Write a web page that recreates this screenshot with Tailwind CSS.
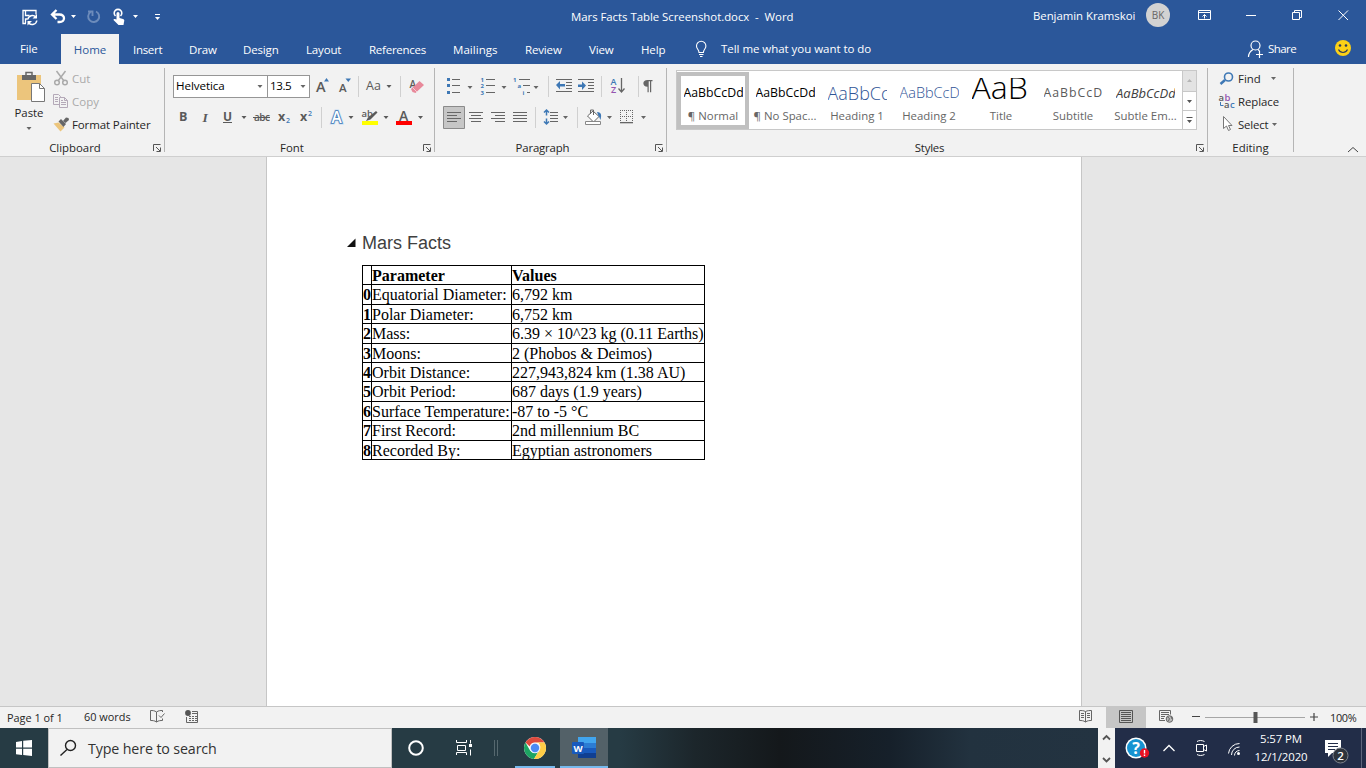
<!DOCTYPE html>
<html lang="en">
<head>
<meta charset="utf-8">
<title>Mars Facts Table Screenshot.docx - Word</title>
<script src="https://cdn.jsdelivr.net/npm/@tailwindcss/browser@4"></script>
</head>
<body class="w-[1366px] h-[768px] overflow-hidden flex flex-col bg-[#e6e6e6] font-['Open_Sans','Noto_Sans',sans-serif] text-[11.4px] leading-4 text-[#262626] whitespace-nowrap">

<!-- Title bar -->
<header class="h-[34px] shrink-0 bg-[#2b579a] text-white flex">
  <svg class="w-[571px] h-[34px] shrink-0" viewBox="0 0 571 34" fill="none">
    <path d="M26 23.500h-3v-13h13v4M25.500 11v4.500h4M25.500 23v-4h2" stroke="#fff" stroke-width="1.300"/>
    <path d="M27.800 19.500a4.600 4.600 0 0 1 8-2.500M36.800 20.500a4.600 4.600 0 0 1-8 2.500" stroke="#fff" stroke-width="1.500"/><path d="M37 14v4.500h-4.500zM27.500 25.500v-4.500h4.500z" fill="#fff"/>
    <path d="M53 14.500h6.500c6 0 6 7.500 0 7.500h-2M56.500 10l-4.500 4.500 4.500 4.500" stroke="#fff" stroke-width="2.300"/>
    <path d="M71 15h5l-2.500 3zM133 15h5l-2.500 3z" fill="#fff"/>
    <path d="M90.500 12a5.500 5.500 0 1 0 5.500-.5M88 11.500h4.500v4.500" stroke="#6d8cbb" stroke-width="1.900"/>
    <path d="M115.500 16a3.800 3.800 0 1 1 5 0" stroke="#fff" stroke-width="1.600"/>
    <path d="M116.500 13.500a1.500 1.500 0 0 1 3 0v4.500l3.500 1c1.500.5 1.500 1.500 1 3l-.5 3h-5l-5-5c0-1 1.500-1.500 3-.5z" fill="#fff"/>
    <path d="M155 14.500h5" stroke="#fff"/><path d="M155 17h5l-2.500 3z" fill="#fff"/>
  </svg>
  <div class="w-[462px] h-[33px] flex items-center whitespace-pre tracking-[-0.03px]">Mars Facts Table Screenshot.docx  -  Word</div>
  <div class="w-[113px] h-[31px] flex items-center tracking-[-0.04px]">Benjamin Kramskoi</div>
  <div class="size-6 mt-[3px] rounded-full bg-[#d2d2d2] text-[#666] text-[10px] flex items-center justify-center">BK</div>
  <svg class="w-[196px] h-[34px] shrink-0" viewBox="1170 0 196 34" fill="none" stroke="#fff">
    <path d="M1198.500 10.500h12v9h-12zM1198.500 12.500h12M1204.500 18.500v-4M1202.500 16.500l2-2 2 2M1246 15.500h10M1292.500 12.500h7v7h-7zM1294.500 12v-1.500h7v7h-2M1338.500 10.500l9.500 9.500M1348 10.500l-9.500 9.500"/>
  </svg>
</header>

<!-- Ribbon tabs -->
<nav class="h-[30px] shrink-0 bg-[#2b579a] text-white flex items-center text-[11.500px] tracking-[-0.15px]">
  <span class="w-[61px] pl-5">File</span>
  <span class="w-[58px] h-[30px] pt-0.5 bg-[#f2f2f2] text-[#2b579a] flex items-center justify-center tracking-normal">Home</span>
  <span class="w-[70px] pl-3.5 pt-0.5 tracking-[-0.3px]">Insert</span>
  <span class="w-[54px] pt-0.5">Draw</span>
  <span class="w-[63px] pt-0.5">Design</span>
  <span class="w-[63px] pt-0.5">Layout</span>
  <span class="w-[84px] pt-0.5 tracking-[-0.25px]">References</span>
  <span class="w-[72px] pt-0.5 tracking-[0.05px]">Mailings</span>
  <span class="w-[64px] pt-0.5">Review</span>
  <span class="w-[52px] pt-0.5">View</span>
  <span class="w-[52px] pt-0.5">Help</span>
  <svg class="w-[28px] h-[30px]" viewBox="693 34 28 30" fill="none" stroke="#fff" stroke-width="1.100"><path d="M699 52.500c0-3-2.500-3.500-2.500-6.500a4.700 4.700 0 0 1 9.400 0c0 3-2.500 3.500-2.500 6.500zM699 54.500h4.500M700 56.500h2.500"/></svg>
  <span class="w-[526px] tracking-[-0.04px]">Tell me what you want to do</span>
  <svg class="w-[21px] h-[30px]" viewBox="1247 34 21 30" fill="none" stroke="#fff" stroke-width="1.200"><circle cx="1255.500" cy="45.500" r="4.500"/><path d="M1248.500 57c0-4 2-6 4.500-7.500M1258 49.500l1.500 1.500M1256 54.500h7M1259.500 51v7"/></svg>
  <span class="w-[67px] tracking-[-0.55px]">Share</span>
  <svg class="w-[31px] h-[30px]" viewBox="1335 34 31 30"><circle cx="1343" cy="48" r="8" fill="#fcd116"/><circle cx="1340" cy="45.500" r="1.300" fill="#2b3a5a"/><circle cx="1346" cy="45.500" r="1.300" fill="#2b3a5a"/><path d="M1338.500 49.500c2 4 7 4 9 0" fill="none" stroke="#2b3a5a" stroke-width="1.200"/></svg>
</nav>

<!-- Ribbon -->
<section class="h-[93px] shrink-0 bg-[#f2f2f2] border-b border-[#cfcfcf] flex">
  <!-- Clipboard -->
  <div class="w-[165px] h-[92px] flex flex-col">
    <div class="flex h-[75px]">
      <div class="w-[52px] flex flex-col items-center pl-[6px]">
        <svg class="w-[46px] h-[40px] shrink-0" viewBox="6 64 46 40"><path d="M17 75h24v25H17z" fill="#ecc57c"/><path d="M22 75h14v5H22z" fill="#666"/><path d="M26 75.500v-3h6v3" fill="none" stroke="#666" stroke-width="1.500"/><path d="M31.500 83.500h8l5 5v13h-13z" fill="#fff" stroke="#777"/><path d="M39.500 83.500v5h5" fill="none" stroke="#777"/></svg>
        <span class="mt-px">Paste</span>
        <svg class="w-[6px] h-[5px] mt-[5px]" viewBox="0 0 6 5"><path d="M.5 1h5L3 4z" fill="#666"/></svg>
      </div>
      <div class="flex flex-col pt-[3px] text-[#aaa] text-[11.500px]">
        <div class="flex items-center h-[23px]"><svg class="w-5 h-[23px]" viewBox="52 67 20 23" fill="none" stroke="#aaa" stroke-width="1.500"><path d="M56.500 71l7.500 10M65.500 71l-7.500 10"/><circle cx="57" cy="82.500" r="2.300"/><circle cx="65" cy="82.500" r="2.300"/></svg>Cut</div>
        <div class="flex items-center h-[23px]"><svg class="w-5 h-[23px]" viewBox="52 90 20 23" fill="#f2f2f2" stroke="#b4a9b8"><path d="M53.500 94.500h5l2 2v8h-7zM55 97.500h3M55 99.500h3M55 101.500h3"/><path d="M59.500 97.500h5l3 3v7h-8zM64.500 97.500v3h3M61 102.500h5M61 104.500h5M61 100.500h2"/></svg>Copy</div>
        <div class="flex items-center h-[23px] text-[#262626] tracking-[-0.12px]"><svg class="w-5 h-[23px]" viewBox="52 113 20 23"><path d="M53.500 123.500l5-1 6 5-4 4z" fill="#ecc57c"/><path d="M58.500 121.500l2.500-2.500 5 5-2.500 3z" fill="#666"/><path d="M63 121l3-3.500 2.500.500.500 2-3.500 3z" fill="#666"/></svg>Format Painter</div>
      </div>
    </div>
    <div class="flex h-[17px] items-center"><span class="w-[150px] text-center">Clipboard</span><svg class="w-[11px] h-[17px]" viewBox="150 139 11 17" fill="none" stroke="#555"><path d="M153.500 151v-6.500h7M156 147l4 4M160.500 147.500v4h-4"/></svg></div>
  </div>
  <!-- Font -->
  <div class="w-[270px] flex">
    <div class="w-px h-[84px] mt-1 -ml-px bg-[#b5b5b5]"></div>
    <div class="w-[270px]">
      <div class="flex pt-[11px] h-[39px]">
        <div class="ml-2 w-[95px] h-[23px] border border-[#969696] bg-white flex items-center pl-0.5 text-[11.600px] text-black"><span class="w-[81px] -mt-0.5 tracking-[-0.08px]">Helvetica</span><svg class="w-[6px] h-[4px]" viewBox="0 0 6 4"><path d="M.5 0h5L3 3z" fill="#666"/></svg></div>
        <div class="-ml-px w-[43px] h-[23px] border border-[#969696] bg-white flex items-center pl-0.5 text-[11.600px] text-black"><span class="w-[30px] -mt-0.5 tracking-[-0.4px]">13.5</span><svg class="w-[6px] h-[4px]" viewBox="0 0 6 4"><path d="M.5 0h5L3 3z" fill="#666"/></svg></div>
        <svg class="w-[124px] h-[28px]" viewBox="310 75 124 28" fill="#5a5a5a">
          <text x="316" y="92" font-size="14.500" font-weight="600">A</text><path d="M324 81.500l2.500-3.500 2.500 3.500z" fill="#3e78b5"/>
          <text x="339" y="92" font-size="11.500" font-weight="600">A</text><path d="M345.500 78.500h5.500l-2.700 3.500z" fill="#3e78b5"/>
          <path d="M358 76h1v21h-1zM400 76h1v21h-1z" fill="#d0d0d0"/>
          <text x="366" y="90" font-size="12.500">Aa</text><path d="M386.500 85h5l-2.500 3z"/>
          <text x="409.500" y="87.500" font-size="10" font-weight="600">A</text><path d="M411 89l8.500-8 4.500 4-8.500 8-3-1z" fill="#e8899a"/><path d="M412.500 87.500l4.500 4.500" stroke="#f6ccd4"/>
        </svg>
      </div>
      <svg class="w-[269px] h-[36px]" viewBox="165 103 269 36" fill="#5a5a5a">
        <text x="179" y="121" font-size="12.500" font-weight="700">B</text>
        <text x="202.500" y="121.500" font-size="13.500" font-weight="700" font-style="italic" font-family="Liberation Serif">I</text>
        <text x="223" y="120.500" font-size="12" font-weight="700">U</text><path d="M223 122h9v1h-9z"/>
        <path d="M241.500 116h5l-2.500 3zM348.500 116h5l-2.500 3zM383.500 116h5l-2.500 3zM418 116h5l-2.500 3z"/>
        <text x="254" y="121" font-size="10" font-weight="600" textLength="16">abc</text><path d="M253 117h17v1h-17z"/>
        <text x="278" y="121" font-size="12.500" font-weight="700">x</text><text x="286" y="123" font-size="7" font-weight="600" fill="#3e78b5">2</text>
        <text x="300" y="121" font-size="12.500" font-weight="700">x</text><text x="308" y="116" font-size="7" font-weight="600" fill="#3e78b5">2</text>
        <path d="M321 107h1v21h-1z" fill="#d0d0d0"/>
        <text x="331.500" y="122.500" font-size="15.500" font-weight="600" fill="#fff" stroke="#c9ddf2" stroke-width="3" paint-order="stroke">A</text><text x="331.500" y="122.500" font-size="15.500" font-weight="600" fill="#fff" stroke="#3e78b5" stroke-width="1.600" paint-order="stroke">A</text>
        <text x="361.500" y="116.500" font-size="9.500" font-weight="600">ab</text><path d="M376 111l1.500 1.500-7 7-4.500 1.500 2-3.500z"/><path d="M362 121h16v4h-16z" fill="#ff0"/>
        <text x="399" y="120.500" font-size="14" font-weight="600">A</text><path d="M396 121h16v4h-16z" fill="red"/>
      </svg>
      <div class="flex h-[17px] items-center"><span class="w-[254px] text-center">Font</span><svg class="w-[15px] h-[17px]" viewBox="419 139 15 17" fill="none" stroke="#555"><path d="M423.500 151v-6.500h7M426 147l4 4M430.500 147.500v4h-4"/></svg></div>
    </div>
  </div>
  <!-- Paragraph -->
  <div class="w-[232px] flex">
    <div class="w-px h-[84px] mt-1 -ml-px bg-[#b5b5b5]"></div>
    <div class="w-[232px]">
      <svg class="w-[232px] h-[39px]" viewBox="435 64 232 39" fill="#666">
        <path d="M447 78h3v3h-3zM447 84h3v3h-3zM447 91h3v3h-3zM556 85l4-4v3h5v2.500h-5v3zM586 85.500l-4-4v3h-4v2.500h4v3z" fill="#3e78b5"/>
        <path d="M452 79h8v1h-8zM452 85h8v1h-8zM452 92h8v1h-8zM486 79h9v1h-9zM486 85h9v1h-9zM486 92h9v1h-9zM519 79h11v1h-11zM523 85h7v1h-7zM527 92h3v1h-3z"/>
        <path d="M467.500 86h5l-2.500 3zM501.500 86h5l-2.500 3zM533.500 86h5l-2.500 3z"/>
        <g fill="#3e78b5" font-size="6" font-weight="700"><text x="480.500" y="81.500">1</text><text x="480.500" y="88">2</text><text x="480.500" y="94.500">3</text><text x="513" y="81.500">1</text><text x="517.500" y="87.500">a</text><text x="522.500" y="94.500">i</text></g>
        <path d="M548 76h1v21h-1zM601 76h1v21h-1zM638 76h1v21h-1z" fill="#d0d0d0"/>
        <path d="M556 79h16v1h-16zM566 82h6v1h-6zM566 85h6v1h-6zM566 88h6v1h-6zM556 91h16v1h-16zM578 79h16v1h-16zM588 82h6v1h-6zM588 85h6v1h-6zM588 88h6v1h-6zM578 91h16v1h-16z"/>
        <text x="610.500" y="84.500" font-size="9" font-weight="600" fill="#3e78b5">A</text><text x="611" y="93" font-size="9" font-weight="600" fill="#9455b0">Z</text>
        <path d="M621.500 78v14M618.500 88.500l3 3.500 3-3.500" fill="none" stroke="#666" stroke-width="1.300"/>
        <path d="M647.500 80h5v1.200h-1.300v11h-1.200v-11h-1.300v11h-1.200v-5.500c-5.500 0-5.500-6.700 0-6.700z"/>
      </svg>
      <svg class="w-[232px] h-[36px]" viewBox="435 103 232 36" fill="#666">
        <path d="M443.500 106.500h21v22h-21z" fill="#c6c6c6" stroke="#8a8a8a"/>
        <path d="M447 112h14v1h-14zM447 115h10v1h-10zM447 118h14v1h-14zM447 121h10v1h-10zM469 112h14v1h-14zM471 115h10v1h-10zM469 118h14v1h-14zM471 121h10v1h-10zM491 112h14v1h-14zM495 115h10v1h-10zM491 118h14v1h-14zM495 121h10v1h-10zM513 112h14v1h-14zM513 115h14v1h-14zM513 118h14v1h-14zM513 121h14v1h-14zM550 112h8v1h-8zM550 115h8v1h-8zM550 118h8v1h-8zM550 121h8v1h-8z"/>
        <path d="M535 107h1v21h-1zM577 107h1v21h-1z" fill="#d0d0d0"/>
        <path d="M546.500 110v5.500M546.500 118.500v5.500M544 112.500l2.500-2.500 2.500 2.500M544 121.500l2.500 2.500 2.500-2.500" fill="none" stroke="#3e78b5" stroke-width="1.500"/>
        <path d="M563 116h5l-2.500 3zM607 116h5l-2.500 3zM641 116h5l-2.500 3z"/>
        <path d="M587.500 116l5.500-5 6 5.500-5.500 5.500z" fill="#fff" stroke="#666"/><path d="M590.500 114v-4h3v5" fill="none" stroke="#666"/><path d="M597 112c5 0 4.500 4 3.500 8-1-2-1-3-2-4z" fill="#3e78b5"/><path d="M585.500 121.500h15v3h-15z" fill="#fff" stroke="#888"/>
        <path d="M620.500 110v12M626.500 110v12M632.500 110v12M620 110.500h13M620 116.500h13" fill="none" stroke="#666" stroke-dasharray="1 1"/><path d="M620 122h13v1.300h-13z"/>
      </svg>
      <div class="flex h-[17px] items-center"><span class="w-[215px] text-center tracking-[-0.15px]">Paragraph</span><svg class="w-[15px] h-[17px]" viewBox="650 139 15 17" fill="none" stroke="#555"><path d="M655.500 151v-6.500h7M658 147l4 4M662.500 147.500v4h-4"/></svg></div>
    </div>
  </div>
  <!-- Styles -->
  <div class="w-[541px] flex">
    <div class="w-px h-[84px] mt-1 -ml-px bg-[#b5b5b5]"></div>
    <div class="w-[541px]">
      <div class="h-[75px] pt-[6px] pl-[9px]">
        <div class="w-[521px] h-[60px] bg-white border border-[#c8c8c8] flex text-[#666] text-[11.400px]">
          <div class="w-[72px] h-[57px] mt-px border-4 border-[#c0c0c0] flex flex-col items-center"><div class="w-[59px] h-[32px] overflow-hidden text-black leading-[34px] text-[12.300px]">AaBbCcDd</div><span>¶ Normal</span></div>
          <div class="w-[72px] flex flex-col items-center pt-[5px]"><div class="w-[59px] h-[32px] overflow-hidden text-black leading-[34px] text-[12.300px]">AaBbCcDd</div><span>¶ No Spac...</span></div>
          <div class="w-[72px] flex flex-col items-center pt-[5px]"><div class="w-[59px] h-[32px] overflow-hidden text-[#2f5496] leading-[34px] text-[18px] font-light">AaBbCc</div><span>Heading 1</span></div>
          <div class="w-[72px] flex flex-col items-center pt-[5px]"><div class="w-[59px] h-[32px] overflow-hidden text-[#2f5496] leading-[34px] text-[14.500px] font-light">AaBbCcD</div><span>Heading 2</span></div>
          <div class="w-[72px] flex flex-col items-center pt-[7px]"><div class="w-[59px] h-[30px] overflow-hidden text-black leading-[18px] text-[32px] font-light">AaB</div><span>Title</span></div>
          <div class="w-[72px] flex flex-col items-center pt-[5px]"><div class="w-[59px] h-[32px] overflow-hidden text-[#5a5a5a] leading-[34px] text-[12.300px] tracking-[1px]">AaBbCcD</div><span>Subtitle</span></div>
          <div class="w-[73px] flex flex-col items-center pt-[5px]"><div class="w-[59px] h-[32px] overflow-hidden text-[#404040] leading-[34px] text-[13px] italic">AaBbCcDd</div><span>Subtle Em...</span></div>
          <svg class="w-[14px] h-[58px] shrink-0" viewBox="1182 71 14 58"><path d="M1182 71h14v20h-14z" fill="#e3e3e3"/><path d="M1182.500 71v58M1182 91.500h14M1182 110.500h14" stroke="#c8c8c8"/><path d="M1187 82h5l-2.500-3z" fill="#b5b5b5"/><path d="M1187 100h5l-2.500 3zM1186.500 117h6v1h-6zM1187 120h5l-2.500 3z" fill="#555"/></svg>
        </div>
      </div>
      <div class="flex h-[17px] items-center"><span class="w-[525px] text-center tracking-[-0.2px]">Styles</span><svg class="w-[15px] h-[17px]" viewBox="1192 139 15 17" fill="none" stroke="#555"><path d="M1196.500 151v-6.500h7M1199 147l4 4M1203.500 147.500v4h-4"/></svg></div>
    </div>
  </div>
  <!-- Editing -->
  <div class="w-[86px] flex">
    <div class="w-px h-[84px] mt-1 -ml-px bg-[#b5b5b5]"></div>
    <div class="w-[86px] flex flex-col">
      <div class="h-[75px] pt-[3px] pl-2 text-[11.400px]">
        <div class="flex items-center h-[23px]"><svg class="w-[22px] h-[23px]" viewBox="1216 67 22 23" fill="none" stroke="#3e78b5"><circle cx="1228.500" cy="77" r="4" stroke-width="1.600"/><path d="M1225 80l-4.500 4" stroke-width="2.400"/></svg><span class="w-[32px]">Find</span><svg class="w-[8px] h-[4px]" viewBox="0 0 8 4"><path d="M1 0h5L3.500 3z" fill="#666"/></svg></div>
        <div class="flex items-center h-[23px] tracking-[-0.05px]"><svg class="w-[22px] h-[23px]" viewBox="1216 90 22 23" font-size="9.500" font-weight="600"><text x="1218.500" y="100.500" fill="#5a5a5a">a</text><text x="1224.500" y="100.500" fill="#9455b0">b</text><text x="1224" y="108" fill="#5a5a5a">a</text><text x="1230" y="108" fill="#3e78b5">c</text><path d="M1220.500 102v3.500h3" fill="none" stroke="#3e78b5"/></svg>Replace</div>
        <div class="flex items-center h-[23px] tracking-[-0.15px]"><svg class="w-[22px] h-[23px]" viewBox="1216 113 22 23"><path d="M1223.500 116.500v12l3-2.500 2 4.500 2-1-2-4h3.500z" fill="#fff" stroke="#777"/></svg><span class="w-[33px]">Select</span><svg class="w-[8px] h-[4px]" viewBox="0 0 8 4"><path d="M1 0h5L3.500 3z" fill="#666"/></svg></div>
      </div>
      <span class="w-[85px] h-[17px] leading-[17px] text-center">Editing</span>
    </div>
  </div>
  <div class="w-[72px] flex"><div class="w-px h-[84px] mt-1 -ml-px bg-[#b5b5b5]"></div>
    <svg class="w-[72px] h-[92px]" viewBox="1294 64 72 92"><path d="M1348 152l5-4.500 5 4.500" fill="none" stroke="#444"/></svg></div>
</section>

<!-- Document canvas -->
<main class="h-[549px] shrink-0 bg-[#e6e6e6] pl-[266px]">
  <article class="w-[816px] h-[549px] bg-white border-x border-[#c6c6c6] pt-[75px] pl-20">
    <h1 class="flex items-center h-[22px] font-['Liberation_Sans',sans-serif] text-[18px] text-[#404040] leading-[22px]"><svg class="w-[15px] h-[10px]" viewBox="0 0 15 10"><path d="M0 9l8.500-8.500V9z" fill="#111"/></svg><span>Mars Facts</span></h1>
    <div class="ml-[15px] mt-[11px] w-[343px] border border-black grid grid-cols-[9px_140px_192px] grid-rows-[19px_20px_19px_20px_19px_19px_20px_19px_20px_18px] font-['Liberation_Serif',serif] text-[16px] leading-[20px] text-black">
      <b class="border-b border-r border-black"></b><b class="border-b border-r border-black">Parameter</b><b class="border-b border-black">Values</b>
      <b class="border-b border-r border-black">0</b><span class="border-b border-r border-black">Equatorial Diameter:</span><span class="border-b border-black">6,792 km</span>
      <b class="border-b border-r border-black">1</b><span class="border-b border-r border-black">Polar Diameter:</span><span class="border-b border-black">6,752 km</span>
      <b class="border-b border-r border-black">2</b><span class="border-b border-r border-black">Mass:</span><span class="border-b border-black">6.39 × 10^23 kg (0.11 Earths)</span>
      <b class="border-b border-r border-black">3</b><span class="border-b border-r border-black">Moons:</span><span class="border-b border-black">2 (Phobos &amp; Deimos)</span>
      <b class="border-b border-r border-black">4</b><span class="border-b border-r border-black">Orbit Distance:</span><span class="border-b border-black">227,943,824 km (1.38 AU)</span>
      <b class="border-b border-r border-black">5</b><span class="border-b border-r border-black">Orbit Period:</span><span class="border-b border-black">687 days (1.9 years)</span>
      <b class="border-b border-r border-black">6</b><span class="border-b border-r border-black">Surface Temperature:</span><span class="border-b border-black">-87 to -5 °C</span>
      <b class="border-b border-r border-black">7</b><span class="border-b border-r border-black">First Record:</span><span class="border-b border-black">2nd millennium BC</span>
      <b class="border-r border-black">8</b><span class="border-r border-black">Recorded By:</span><span>Egyptian astronomers</span>
    </div>
  </article>
</main>

<!-- Status bar -->
<footer class="h-[22px] shrink-0 bg-[#f2f2f2] border-t border-[#c6c6c6] flex items-center text-[10.900px]">
  <span class="w-[84px] pl-[7px] pt-px">Page 1 of 1</span>
  <span class="w-[62px] pb-px">60 words</span>
  <svg class="w-[60px] h-[21px]" viewBox="146 707 60 21" fill="none" stroke="#666"><path d="M156.500 712c-2-1.500-4-1.500-6-1.500v10c2 0 4 0 6 1.500zM156.500 712c2-1.500 4-1.500 6-1.500v1.500M156.500 722c2-1.500 4-1.500 6-1.500v-2M159 715.500l2 2 3.500-4"/><path d="M186.500 717v5.500h11v-11h-5.500M192 713.500h5M189 716.500h2M192 716.500h2M195 716.500h2M189 718.500h2M192 718.500h2M195 718.500h2M189 720.500h2M192 720.500h2M195 720.500h2"/><circle cx="188" cy="713" r="2.900" fill="#555" stroke="none"/></svg>
  <svg class="ml-auto w-[36px] h-[21px]" viewBox="1070 707 36 21" fill="none" stroke="#666"><path d="M1085.500 711.500c-2-1-4-1-6-1v10c2 0 4 0 6 1.500zM1085.500 711.500c2-1 4-1 6-1v10c-2 0-4 0-6 1.500M1081 713.500h3M1081 715.500h3M1081 717.500h3M1087 713.500h3M1087 715.500h3M1087 717.500h3"/></svg>
  <svg class="w-[40px] h-[21px] bg-[#c6c6c6]" viewBox="1106 707 40 21" fill="none" stroke="#555"><path d="M1119.500 710.500h13v12h-13zM1121 712.500h10M1121 714.500h10M1121 716.500h10M1121 718.500h10M1121 720.500h10"/></svg>
  <svg class="w-[184px] h-[21px]" viewBox="1146 707 184 21" fill="none" stroke="#666"><path d="M1165 720.500h-5.500v-10h11v4M1161 712.500h8M1161 714.500h8M1161 716.500h4M1161 718.500h3"/><circle cx="1169.500" cy="719" r="3.300" fill="#bbb"/><path d="M1167.500 717l2 1.500-1 2.500M1171 716.500l1 2.500" stroke="#666"/><path d="M1192 716.500h8M1310 717h8M1314 713v8" stroke="#444" stroke-width="1.200"/><path d="M1205 717.500h100" stroke="#a6a6a6"/><path d="M1253.500 712h4v11h-4z" fill="#555" stroke="none"/></svg>
  <span class="w-[36px] pt-px tracking-[-0.3px]">100%</span>
</footer>

<!-- Taskbar -->
<footer class="h-[40px] shrink-0 flex bg-[linear-gradient(90deg,#263b44_0px,#263b44_620px,#1c262b_695px,#14181b_780px,#16202a_890px,#22323f_970px,#233341_1098px)]">
  <svg class="w-12 h-10" viewBox="0 0 48 40" fill="#fff"><path d="M16 14l6-1v6.500h-6zM23.200 12.800L32 12v7.500h-8.800zM16 20.700h6V27l-6-.8zM23.200 20.700H32V28l-8.800-.9z"/></svg>
  <div class="w-[344px] h-10 bg-[#f2f2f2] border border-[#c0c0c0] flex items-center text-[14.250px] tracking-[-0.13px] pt-0.5 text-[#333]"><svg class="w-[39px] h-[38px] -mt-0.5" viewBox="49 729 39 38" fill="none" stroke="#222" stroke-width="1.400"><circle cx="70.500" cy="745.500" r="5"/><path d="M67 749.500l-6.500 6"/></svg>Type here to search</div>
  <svg class="w-[123px] h-10" viewBox="392 728 123 40" fill="none" stroke="#fff"><circle cx="416" cy="748" r="6.800" stroke-width="2"/><path d="M456.500 740v2.500h10v-2.500M456.500 755v-2.500h10v2.500M457.500 745.500h8v5h-8zM470.500 740v3.500M470.500 749.500v6"/><path d="M469 744h3v3h-3z" fill="#fff" stroke="none"/><path d="M494.500 740v16M497.500 740v16" stroke="#56686f"/></svg>
  <svg class="w-[45px] h-10" viewBox="515 728 45 40"><circle cx="535" cy="748" r="11" fill="#fff"/><path d="M525.500 742.500a11 11 0 0 1 19 0h-9.500a5.500 5.500 0 0 0-5.300 4z" fill="#dd4b3e"/><path d="M525.500 742.500a11 11 0 0 0 8.500 16.500l5-8.300a5.500 5.500 0 0 1-8.800 0z" fill="#1da462"/><path d="M544.500 742.500a11 11 0 0 1-10.500 16.500l5-8.300a5.500 5.500 0 0 0-.5-7.700l-3.500-.5z" fill="#ffcd46"/><circle cx="535" cy="748" r="5.200" fill="#e8eefb"/><circle cx="535" cy="748" r="4.200" fill="#4a8af4"/><path d="M515 766h40v2h-40z" fill="#76b9ed"/></svg>
  <svg class="w-[48px] h-10 bg-[#536168]" viewBox="560 728 48 40"><path d="M578 737h18v6h-18z" fill="#41a5ee"/><path d="M578 743h18v5h-18z" fill="#2b7cd3"/><path d="M578 748h18v5h-18z" fill="#185abd"/><path d="M578 753h18v5h-18z" fill="#103f91"/><rect x="572" y="742" width="12" height="12" rx="1" fill="#185abd"/><text x="578" y="752" font-size="9.500" font-weight="700" fill="#fff" text-anchor="middle">W</text><path d="M560 766h48v2h-48z" fill="#76b9ed"/></svg>
  <svg class="ml-auto w-[17px] h-10 bg-[#f2f2f2]" viewBox="1098 728 17 40" fill="none" stroke="#555" stroke-width="1.800"><path d="M1103 739.500l3.500-3.500 3.500 3.500M1103 758l3.500 3.500 3.500-3.500"/></svg>
  <div class="w-[251px] h-10 bg-[#222d48] flex text-white">
    <svg class="w-[135px] h-10" viewBox="1115 728 135 40" fill="none" stroke="#fff"><circle cx="1136" cy="748" r="10.500" fill="#fff" stroke="none"/><circle cx="1136" cy="748" r="9" fill="#1793d1" stroke="none"/><text x="1136" y="754" font-size="16" font-weight="700" fill="#fff" stroke="none" text-anchor="middle">?</text><circle cx="1144.500" cy="753" r="4.700" fill="#e81123" stroke="none"/><path d="M1144.500 750v3.500M1144.500 754.500v1.500" stroke-width="1.400"/><path d="M1163.500 751l5.500-5.500 5.500 5.500" stroke-width="1.300"/><path d="M1196.500 744.500h7v7h-7zM1203.500 746.500l3-1.500v6l-3-1.500M1197 741.500c2-1.300 5-1.300 7.500 0M1197 754.500c2 1.300 5 1.300 7.500 0"/><path d="M1228.500 753.500a11 11 0 0 1 11-10M1231.500 755a8 8 0 0 1 8-8M1234.500 755.500a5 5 0 0 1 5-5"/><circle cx="1238.500" cy="753.500" r="1.500" fill="#fff" stroke="none"/></svg>
    <div class="w-[62px] h-10 flex flex-col items-center justify-center leading-[18px] text-[11.400px] tracking-[-0.1px]"><span>5:57 PM</span><span>12/1/2020</span></div>
    <svg class="w-[54px] h-10" viewBox="1312 728 54 40"><path d="M1325 740h16v13h-9l-4 4v-4h-3z" fill="#fff"/><path d="M1328 743.500h10M1328 746.500h10M1328 749.500h7" stroke="#222d48"/><circle cx="1340.500" cy="755.500" r="7.500" fill="#2d333c" stroke="#7c828c"/><text x="1340.500" y="759.500" font-size="11.500" font-weight="600" fill="#fff" text-anchor="middle">2</text><path d="M1361.500 728v40" stroke="#5d667c"/></svg>
  </div>
</footer>
</body>
</html>
